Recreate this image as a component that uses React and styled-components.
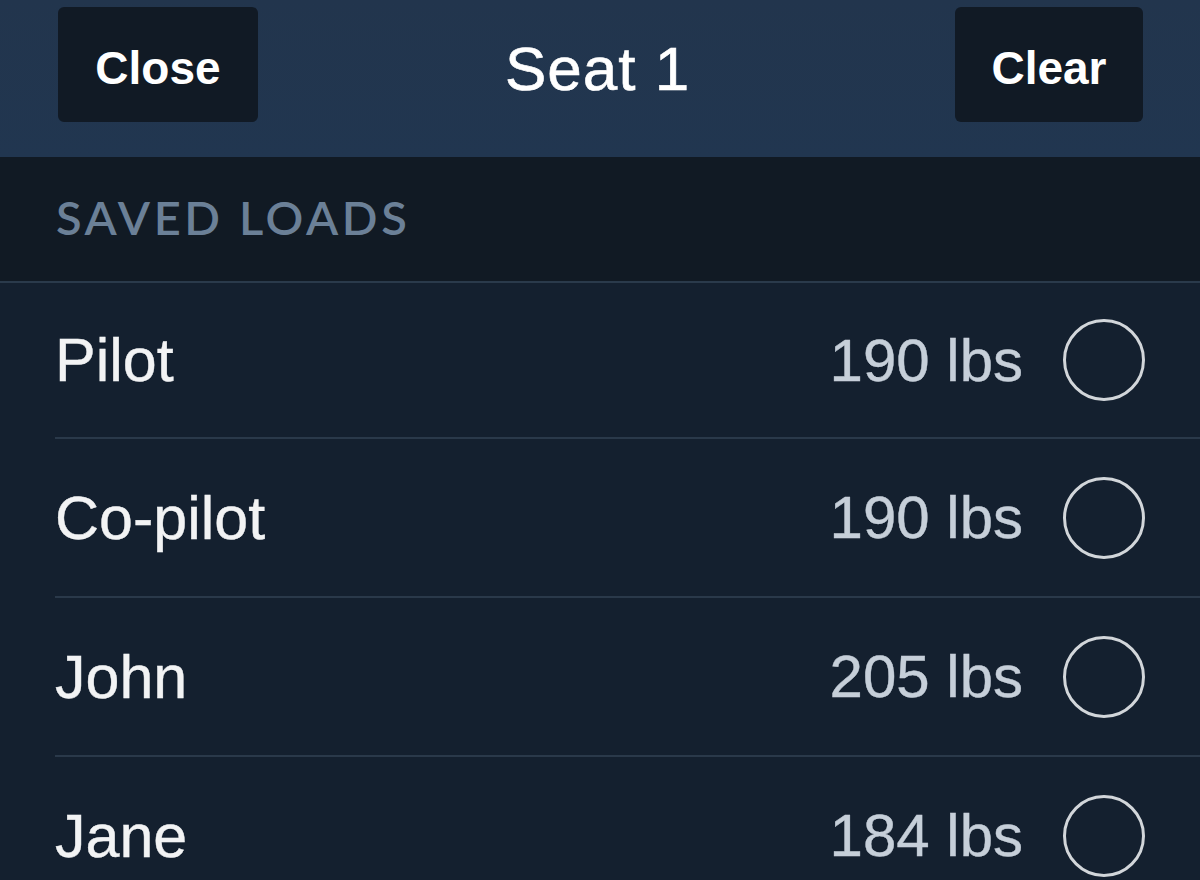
import styled, { createGlobalStyle } from "styled-components";

const GlobalStyle = createGlobalStyle`
  html, body {
    margin: 0;
    padding: 0;
    background: #14202f;
    overflow: hidden;
  }
  body {
    font-family: "Liberation Sans", Arial, sans-serif;
  }
`;

const Screen = styled.div`
  width: 1200px;
  height: 880px;
  overflow: hidden;
  display: flex;
  flex-direction: column;
  background: #14202f;
  & > * {
    flex-shrink: 0;
  }
`;

const Header = styled.header`
  height: 157px;
  box-sizing: border-box;
  padding: 7px 57px 35px 58px;
  display: grid;
  grid-template-columns: 200px 1fr 188px;
  align-items: stretch;
  background: linear-gradient(#22354d, #213650);
`;

const NavButton = styled.button`
  border: none;
  border-radius: 6px;
  background: #111a25;
  color: #ffffff;
  font-family: "Liberation Sans", Arial, sans-serif;
  font-weight: 700;
  font-size: 46px;
  padding: 6px 0 0;
  cursor: pointer;
`;

const Title = styled.h1`
  margin: 0;
  align-self: center;
  text-align: center;
  color: #ffffff;
  font-size: 62px;
  font-weight: 400;
  letter-spacing: 1px;
  padding: 8px 18px 0 0;
  -webkit-text-stroke: 0.6px #ffffff;
`;

const SectionHeader = styled.div`
  height: 126px;
  box-sizing: border-box;
  padding: 0 56px 4px;
  display: flex;
  align-items: center;
  background: #111a24;
  border-bottom: 2px solid #2a3a4b;
  color: #6b8097;
  font-family: Lato, "Open Sans", sans-serif;
  font-weight: 600;
  font-size: 47px;
  letter-spacing: 3.6px;
`;

const List = styled.ul`
  list-style: none;
  margin: 0;
  padding: 0 0 0 55px;
`;

const Row = styled.li`
  height: 159px;
  box-sizing: border-box;
  padding-right: 55px;
  display: flex;
  align-items: center;
  gap: 40px;
  border-bottom: 2px solid #2a394a;
  &:first-child {
    height: 156px;
  }
`;

const Name = styled.span`
  flex: 1;
  color: #f2f3f4;
  font-size: 61px;
  -webkit-text-stroke: 0.4px #f2f3f4;
`;

const Weight = styled.span`
  color: #c6cfd9;
  font-size: 60px;
  -webkit-text-stroke: 0.4px #c6cfd9;
`;

const Radio = styled.span`
  width: 82px;
  height: 82px;
  box-sizing: border-box;
  border-radius: 50%;
  border: 3px solid #d2d6da;
  flex-shrink: 0;
`;

const loads = [
  { name: "Pilot", weight: 190 },
  { name: "Co-pilot", weight: 190 },
  { name: "John", weight: 205 },
  { name: "Jane", weight: 184 },
];

export default function App() {
  return (
    <Screen>
      <GlobalStyle />
      <Header>
        <NavButton>Close</NavButton>
        <Title>Seat 1</Title>
        <NavButton>Clear</NavButton>
      </Header>
      <SectionHeader>SAVED LOADS</SectionHeader>
      <List>
        {loads.map((l) => (
          <Row key={l.name}>
            <Name>{l.name}</Name>
            <Weight>{l.weight} lbs</Weight>
            <Radio />
          </Row>
        ))}
      </List>
    </Screen>
  );
}
